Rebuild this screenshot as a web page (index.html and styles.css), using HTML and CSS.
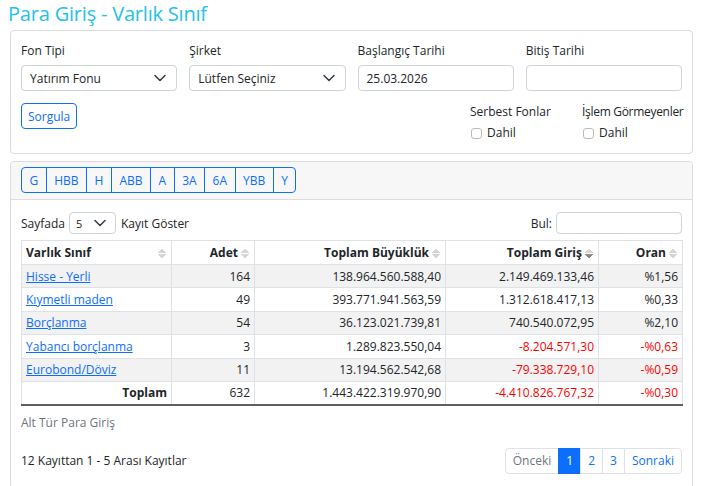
FILE: index.html
```html
<!DOCTYPE html>
<html lang="tr">
<head>
<meta charset="utf-8">
<title>Para Giriş - Varlık Sınıf</title>
<link rel="stylesheet" href="styles.css">
</head>
<body>
<h1 class="title">Para Giriş - Varlık Sınıf</h1>

<div class="card filter-card">
  <div class="filter-grid">
    <div class="field">
      <label class="lbl">Fon Tipi</label>
      <div class="select"><span>Yatırım Fonu</span><svg class="chev" viewBox="0 0 12 8"><path d="M1 1.5l5 5 5-5" fill="none" stroke="#343a40" stroke-width="1.5" stroke-linecap="round" stroke-linejoin="round"/></svg></div>
    </div>
    <div class="field">
      <label class="lbl">Şirket</label>
      <div class="select"><span>Lütfen Seçiniz</span><svg class="chev" viewBox="0 0 12 8"><path d="M1 1.5l5 5 5-5" fill="none" stroke="#343a40" stroke-width="1.5" stroke-linecap="round" stroke-linejoin="round"/></svg></div>
    </div>
    <div class="field">
      <label class="lbl">Başlangıç Tarihi</label>
      <div class="input">25.03.2026</div>
    </div>
    <div class="field">
      <label class="lbl">Bitiş Tarihi</label>
      <div class="input"></div>
    </div>
  </div>
  <div class="filter-row2">
    <div><button class="btn-outline">Sorgula</button></div>
    <div class="chk-group">
      <div class="lbl">Serbest Fonlar</div>
      <div class="chk"><span class="box"></span>Dahil</div>
    </div>
    <div class="chk-group">
      <div class="lbl tight">İşlem Görmeyenler</div>
      <div class="chk"><span class="box"></span>Dahil</div>
    </div>
  </div>
</div>

<div class="card table-card">
  <div class="card-header">
    <div class="btn-group">
      <button>G</button><button>HBB</button><button>H</button><button>ABB</button><button>A</button><button>3A</button><button>6A</button><button>YBB</button><button>Y</button>
    </div>
  </div>
  <div class="card-body">
    <div class="toolbar">
      <div class="len">Sayfada <div class="select small"><span>5</span><svg class="chev" viewBox="0 0 12 8"><path d="M1 1.5l5 5 5-5" fill="none" stroke="#343a40" stroke-width="1.5" stroke-linecap="round" stroke-linejoin="round"/></svg></div> Kayıt Göster</div>
      <div class="search">Bul: <div class="input search-input"></div></div>
    </div>
    <table class="data">
      <colgroup><col class="c1"><col class="c2"><col class="c3"><col class="c4"><col class="c5"></colgroup>
      <thead>
        <tr>
          <th class="left sort">Varlık Sınıf</th>
          <th class="sort">Adet</th>
          <th class="sort">Toplam Büyüklük</th>
          <th class="sort desc">Toplam Giriş</th>
          <th class="sort">Oran</th>
        </tr>
      </thead>
      <tbody>
        <tr class="odd"><td class="left"><a href="#">Hisse - Yerli</a></td><td>164</td><td>138.964.560.588,40</td><td>2.149.469.133,46</td><td>%1,56</td></tr>
        <tr><td class="left"><a href="#">Kıymetli maden</a></td><td>49</td><td>393.771.941.563,59</td><td>1.312.618.417,13</td><td>%0,33</td></tr>
        <tr class="odd"><td class="left"><a href="#">Borçlanma</a></td><td>54</td><td>36.123.021.739,81</td><td>740.540.072,95</td><td>%2,10</td></tr>
        <tr><td class="left"><a href="#">Yabancı borçlanma</a></td><td>3</td><td>1.289.823.550,04</td><td class="neg">-8.204.571,30</td><td class="neg">-%0,63</td></tr>
        <tr class="odd"><td class="left"><a href="#">Eurobond/Döviz</a></td><td>11</td><td>13.194.562.542,68</td><td class="neg">-79.338.729,10</td><td class="neg">-%0,59</td></tr>
      </tbody>
      <tfoot>
        <tr><th>Toplam</th><td>632</td><td>1.443.422.319.970,90</td><td class="neg">-4.410.826.767,32</td><td class="neg">-%0,30</td></tr>
      </tfoot>
    </table>
    <div class="caption">Alt Tür Para Giriş</div>
    <div class="footer">
      <div class="info">12 Kayıttan 1 - 5 Arası Kayıtlar</div>
      <div class="pager">
        <span class="pg disabled">Önceki</span><span class="pg active">1</span><span class="pg">2</span><span class="pg">3</span><span class="pg">Sonraki</span>
      </div>
    </div>
  </div>
</div>
</body>
</html>
```

FILE: styles.css
```css
* { box-sizing: border-box; }
html, body { margin: 0; padding: 0; background: #fff; }
body {
  font-family: "Open Sans", "Noto Sans", sans-serif;
  font-size: 12px;
  color: #212529;
  padding: 0 11px 0 10px;
}
.title {
  margin: 0 0 2px -2px;
  font-weight: 400;
  font-size: 20px;
  line-height: 28px;
  color: #22c3e8;
  letter-spacing: -0.2px;
}
.card {
  border: 1px solid #dcdcdc;
  border-radius: 4px;
  background: #fff;
}
.filter-card { padding: 11px 10px 11px 10px; }
.filter-grid {
  display: grid;
  grid-template-columns: repeat(4, 1fr);
  column-gap: 12px;
}
.lbl { display: block; line-height: 18px; margin-bottom: 5px; white-space: nowrap; }
.lbl.tight { letter-spacing: -0.3px; }
.select, .input {
  height: 26px;
  border: 1px solid #ced4da;
  border-radius: 4px;
  display: flex;
  align-items: center;
  padding: 0 10px 0 8px;
  justify-content: space-between;
  background: #fff;
}
.chev { width: 12px; height: 8px; flex: none; }
.filter-row2 {
  display: grid;
  grid-template-columns: 1fr 112px 100px;
  margin-top: 12px;
}
.btn-outline {
  font: inherit;
  height: 26px;
  padding: 0 6px;
  color: #0d6efd;
  background: #fff;
  border: 1px solid #0d6efd;
  border-radius: 4px;
}
.chk-group .lbl { margin-bottom: 3px; }
.chk { display: flex; align-items: center; line-height: 18px; padding-left: 1px; }
.box {
  width: 11px; height: 11px;
  border: 1px solid #b5bcc4;
  border-radius: 3px;
  margin-right: 5px;
  background: #fff;
}
.table-card { margin-top: 7px; }
.card-header {
  background: #f7f7f7;
  border-bottom: 1px solid #dcdcdc;
  padding: 5px 10px 6px;
  border-radius: 4px 4px 0 0;
}
.btn-group { display: inline-flex; }
.btn-group button {
  font: inherit;
  height: 26px;
  color: #0d6efd;
  background: transparent;
  border: 1px solid #0d6efd;
  margin-left: -1px;
  padding: 0 7.5px;
}
.btn-group button:first-child { margin-left: 0; border-radius: 4px 0 0 4px; }
.btn-group button:last-child { border-radius: 0 4px 4px 0; }
.card-body { padding: 12px 10px 14px; }
.toolbar {
  display: flex;
  justify-content: space-between;
  align-items: center;
  margin-bottom: 6px;
}
.len, .search { display: flex; align-items: center; }
.select.small {
  width: 47px;
  height: 22px;
  margin: 0 5px 0 4px;
  padding: 0 9px 0 6px;
  font-size: 11px;
}
.search-input { width: 126px; height: 22px; margin-left: 4px; }
table.data {
  width: 100%;
  border-collapse: collapse;
  table-layout: fixed;
}
col.c1 { width: 150px; }
col.c2 { width: 83px; }
col.c3 { width: 191px; }
col.c4 { width: 153px; }
col.c5 { width: 84px; }
table.data th, table.data td {
  border: 1px solid #dee2e6;
  height: 23.4px;
  padding: 2px 4px;
  text-align: right;
  white-space: nowrap;
  font-weight: 400;
}
table.data thead th { font-weight: 700; height: 24px; position: relative; padding-right: 16px; }
table.data .left { text-align: left; }
table.data thead th.left { padding-left: 4px; }
table.data tr.odd td { background: #f2f2f2; }
table.data tfoot th { font-weight: 700; }
table.data tfoot tr { border-bottom: 2px solid #5d6166; }
.sort::after {
  content: "";
  position: absolute;
  right: 5px;
  top: 7px;
  width: 8px;
  height: 11px;
  background:
    linear-gradient(to bottom right, transparent 50%, #d6d6d6 50%) 0 0 / 4px 5px no-repeat,
    linear-gradient(to bottom left, transparent 50%, #d6d6d6 50%) 4px 0 / 4px 5px no-repeat,
    linear-gradient(to top right, transparent 50%, #d6d6d6 50%) 0 6px / 4px 5px no-repeat,
    linear-gradient(to top left, transparent 50%, #d6d6d6 50%) 4px 6px / 4px 5px no-repeat;
}
.sort.desc::after {
  background:
    linear-gradient(to bottom right, transparent 50%, #d6d6d6 50%) 0 0 / 4px 5px no-repeat,
    linear-gradient(to bottom left, transparent 50%, #d6d6d6 50%) 4px 0 / 4px 5px no-repeat,
    linear-gradient(to top right, transparent 50%, #8c8c8c 50%) 0 6px / 4px 5px no-repeat,
    linear-gradient(to top left, transparent 50%, #8c8c8c 50%) 4px 6px / 4px 5px no-repeat;
}
a { color: #0d6efd; text-decoration: underline; }
.neg { color: #f00; }
.caption { color: #6c757d; margin-top: 8px; line-height: 18px; }
.footer {
  display: flex;
  justify-content: space-between;
  align-items: center;
  margin-top: 16px;
}
.pager { display: flex; }
.pg {
  height: 26px;
  line-height: 24px;
  padding: 0 7px;
  border: 1px solid #dee2e6;
  margin-left: -1px;
  color: #0d6efd;
  background: #fff;
}
.pg:first-child { border-radius: 4px 0 0 4px; margin-left: 0; }
.pg:last-child { border-radius: 0 4px 4px 0; }
.pg.disabled { color: #6c757d; }
.pg.active { background: #0d6efd; border-color: #0d6efd; color: #fff; }
```
